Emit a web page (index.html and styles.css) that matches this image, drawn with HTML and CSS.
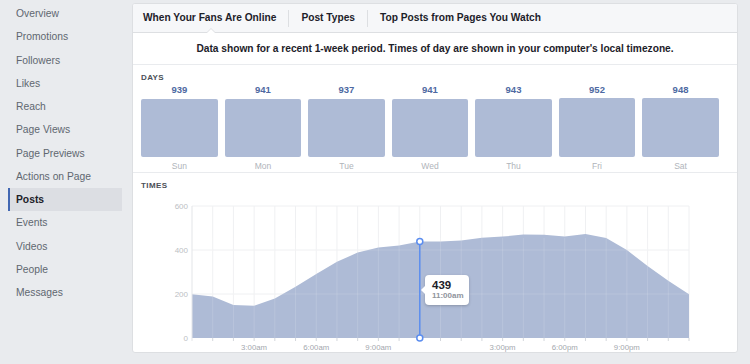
FILE: index.html
```html
<!DOCTYPE html>
<html>
<head>
<meta charset="utf-8">
<link rel="stylesheet" href="styles.css">
</head>
<body>
<div class="page">
  <nav class="sidebar">
    <a class="nav-item">Overview</a>
    <a class="nav-item">Promotions</a>
    <a class="nav-item">Followers</a>
    <a class="nav-item">Likes</a>
    <a class="nav-item">Reach</a>
    <a class="nav-item">Page Views</a>
    <a class="nav-item">Page Previews</a>
    <a class="nav-item">Actions on Page</a>
    <a class="nav-item active">Posts</a>
    <a class="nav-item">Events</a>
    <a class="nav-item">Videos</a>
    <a class="nav-item">People</a>
    <a class="nav-item">Messages</a>
  </nav>
  <main class="card">
    <div class="tabs">
      <div class="tab active">When Your Fans Are Online</div>
      <div class="tab-sep"></div>
      <div class="tab">Post Types</div>
      <div class="tab-sep"></div>
      <div class="tab">Top Posts from Pages You Watch</div>
    </div>
    <div class="notice">Data shown for a recent 1-week period. Times of day are shown in your computer's local timezone.</div>
    <section class="days">
      <div class="section-label">DAYS</div>
      <div class="day-row">
        <div class="day"><div class="day-value">939</div><div class="bar-slot"><div class="bar" style="height:98.6%"></div></div><div class="day-name">Sun</div></div>
        <div class="day"><div class="day-value">941</div><div class="bar-slot"><div class="bar" style="height:98.8%"></div></div><div class="day-name">Mon</div></div>
        <div class="day"><div class="day-value">937</div><div class="bar-slot"><div class="bar" style="height:98.4%"></div></div><div class="day-name">Tue</div></div>
        <div class="day"><div class="day-value">941</div><div class="bar-slot"><div class="bar" style="height:98.8%"></div></div><div class="day-name">Wed</div></div>
        <div class="day"><div class="day-value">943</div><div class="bar-slot"><div class="bar" style="height:99.1%"></div></div><div class="day-name">Thu</div></div>
        <div class="day"><div class="day-value">952</div><div class="bar-slot"><div class="bar" style="height:100%"></div></div><div class="day-name">Fri</div></div>
        <div class="day"><div class="day-value">948</div><div class="bar-slot"><div class="bar" style="height:99.6%"></div></div><div class="day-name">Sat</div></div>
      </div>
    </section>
    <section class="times">
      <div class="section-label">TIMES</div>
      <svg class="chart" width="604" height="162" viewBox="133 190 604 162">
        <path class="grid" d="M192 206H689M192 250H689M192 294H689M212.71 206V338M233.42 206V338M254.13 206V338M274.83 206V338M295.54 206V338M316.25 206V338M336.96 206V338M357.67 206V338M378.38 206V338M399.08 206V338M419.79 206V338M440.5 206V338M461.21 206V338M481.92 206V338M502.63 206V338M523.33 206V338M544.04 206V338M564.75 206V338M585.46 206V338M606.17 206V338M626.88 206V338M647.58 206V338M668.29 206V338M689 206V338"/>
        <path class="area" d="M192 338L192 294.2L212.71 296.6L233.42 305L254.13 305.7L274.83 298.4L295.54 286.7L316.25 274L336.96 261.7L357.67 252.6L378.38 247.4L399.08 245.6L419.79 241.4L440.5 241.4L461.21 240.5L481.92 237.7L502.63 236.6L523.33 234.6L544.04 234.8L564.75 236.4L585.46 233.9L606.17 237.9L626.88 250L647.58 266.1L668.29 280.8L689 294.2L689 338Z"/>
        <path class="grid-over" d="M192 250H689M192 294H689M212.71 238V338M233.42 238V338M254.13 238V338M274.83 238V338M295.54 238V338M316.25 238V338M336.96 238V338M357.67 238V338M378.38 238V338M399.08 238V338M440.5 238V338M461.21 238V338M481.92 238V338M502.63 238V338M523.33 238V338M544.04 238V338M564.75 238V338M585.46 238V338M606.17 238V338M626.88 238V338M647.58 238V338M668.29 238V338"/>
        <path class="axis" d="M192 206V341"/>
        <path class="ticks" d="M212.71 338v3M233.42 338v3M254.13 338v3M274.83 338v3M295.54 338v3M316.25 338v3M336.96 338v3M357.67 338v3M378.38 338v3M399.08 338v3M419.79 338v3M440.5 338v3M461.21 338v3M481.92 338v3M502.63 338v3M523.33 338v3M544.04 338v3M564.75 338v3M585.46 338v3M606.17 338v3M626.88 338v3M647.58 338v3M668.29 338v3M689 338v3"/>
        <g class="y-labels">
          <text x="188" y="209">600</text>
          <text x="188" y="253">400</text>
          <text x="188" y="297">200</text>
          <text x="188" y="341">0</text>
        </g>
        <g class="x-labels">
          <text x="254.13" y="349.5">3:00am</text>
          <text x="316.25" y="349.5">6:00am</text>
          <text x="378.38" y="349.5">9:00am</text>
          <text x="502.63" y="349.5">3:00pm</text>
          <text x="564.75" y="349.5">6:00pm</text>
          <text x="626.88" y="349.5">9:00pm</text>
        </g>
        <path class="cursor" d="M419.79 241.4V338"/>
        <circle class="cursor-dot" cx="419.79" cy="241.4" r="3"/>
        <circle class="cursor-dot" cx="419.79" cy="338" r="3"/>
      </svg>
      <div class="tooltip">
        <div class="tooltip-value">439</div>
        <div class="tooltip-time">11:00am</div>
      </div>
    </section>
  </main>
</div>
</body>
</html>
```

FILE: styles.css
```css
body {
  margin: 0;
  background: #e9ebee;
  font-family: "Liberation Sans", Arial, sans-serif;
}

.page {
  display: flex;
  align-items: flex-start;
}

.sidebar {
  width: 132px;
  flex: none;
  padding-top: 2.2px;
  display: flex;
  flex-direction: column;
}

.nav-item {
  display: block;
  width: 114px;
  height: 23.25px;
  line-height: 23.25px;
  margin-left: 8px;
  padding-left: 8px;
  box-sizing: border-box;
  font-size: 10.3px;
  color: #606770;
}

.nav-item.active {
  background: #dcdee3;
  border-left: 2px solid #4267b2;
  padding-left: 6px;
  font-weight: bold;
  color: #1d2129;
}

.card {
  width: 606px;
  height: 350px;
  flex: none;
  margin-top: 3px;
  box-sizing: border-box;
  background: #fff;
  border: 1px solid #dddfe2;
  border-radius: 3px;
}

.tabs {
  display: flex;
  align-items: center;
  height: 28px;
  background: #f6f7f9;
  border-bottom: 1px solid #dddfe2;
  border-radius: 2px 2px 0 0;
}

.tab {
  position: relative;
  padding: 0 12px;
  line-height: 28px;
  font-size: 10.2px;
  font-weight: bold;
  color: #1d2129;
}

.tab:first-child {
  padding-left: 10px;
}

.tab.active::before,
.tab.active::after {
  content: "";
  position: absolute;
  left: 50%;
  bottom: -1px;
  width: 0;
  height: 0;
  border-style: solid;
  border-color: transparent;
}

.tab.active::before {
  margin-left: -5px;
  border-width: 0 5px 5px;
  border-bottom-color: #dddfe2;
}

.tab.active::after {
  margin-left: -4px;
  border-width: 0 4px 4px;
  border-bottom-color: #fff;
}

.tab-sep {
  width: 1px;
  height: 17px;
  background: #dddfe2;
}

.notice {
  height: 31px;
  line-height: 31px;
  text-align: center;
  font-size: 10.2px;
  font-weight: bold;
  color: #1d2129;
  border-bottom: 1px solid #e9ebee;
}

.days {
  height: 108px;
  box-sizing: border-box;
  padding: 9px 18px 1px 8px;
  border-bottom: 1px solid #e9ebee;
}

.section-label {
  font-size: 8px;
  line-height: 8px;
  font-weight: bold;
  letter-spacing: 0.4px;
  color: #4b4f56;
}

.day-row {
  display: flex;
  gap: 6.67px;
  margin-top: 2px;
}

.day {
  flex: 1;
  display: flex;
  flex-direction: column;
  align-items: center;
}

.day-value {
  font-size: 9.5px;
  line-height: 12px;
  font-weight: bold;
  color: #4e69a2;
}

.bar-slot {
  width: 100%;
  height: 59px;
  margin-top: 2px;
  display: flex;
  align-items: flex-end;
}

.bar {
  width: 100%;
  background: #aebbd6;
  border-radius: 2px;
}

.day-name {
  margin-top: 4px;
  font-size: 8.5px;
  line-height: 10px;
  color: #b0b4ba;
}

.times {
  position: relative;
  height: 179px;
  box-sizing: border-box;
  padding-top: 9px;
}

.times .section-label {
  margin-left: 8px;
}

.chart {
  display: block;
}

.grid {
  fill: none;
  stroke: #eff0f2;
  stroke-width: 1;
}

.area {
  fill: #aebbd6;
}

.grid-over {
  fill: none;
  stroke: rgba(255, 255, 255, 0.14);
  stroke-width: 1;
}

.axis {
  fill: none;
  stroke: #e3e5e8;
  stroke-width: 1;
}

.ticks {
  fill: none;
  stroke: #d3d6db;
  stroke-width: 1;
}

.y-labels text {
  font-family: "Liberation Sans", Arial, sans-serif;
  font-size: 8px;
  fill: #bcc0c4;
  text-anchor: end;
}

.x-labels text {
  font-family: "Liberation Sans", Arial, sans-serif;
  font-size: 7.8px;
  fill: #a4a8ae;
  text-anchor: middle;
}

.cursor {
  fill: none;
  stroke: #5b8def;
  stroke-width: 1.5;
}

.cursor-dot {
  fill: #fff;
  stroke: #5b8def;
  stroke-width: 1.5;
}

.tooltip {
  position: absolute;
  left: 292px;
  top: 102px;
  width: 44px;
  height: 30px;
  box-sizing: border-box;
  padding: 4px 0 0 7px;
  background: #fff;
  border-radius: 4px;
  box-shadow: 0 1px 3px rgba(0, 0, 0, 0.22);
}

.tooltip::before {
  content: "";
  position: absolute;
  left: -4px;
  top: 11px;
  border-style: solid;
  border-width: 4px 4px 4px 0;
  border-color: transparent #fff transparent transparent;
}

.tooltip-value {
  font-size: 11.5px;
  line-height: 12px;
  font-weight: bold;
  color: #1d2129;
}

.tooltip-time {
  font-size: 8px;
  line-height: 10px;
  font-weight: bold;
  color: #90949c;
}
```
